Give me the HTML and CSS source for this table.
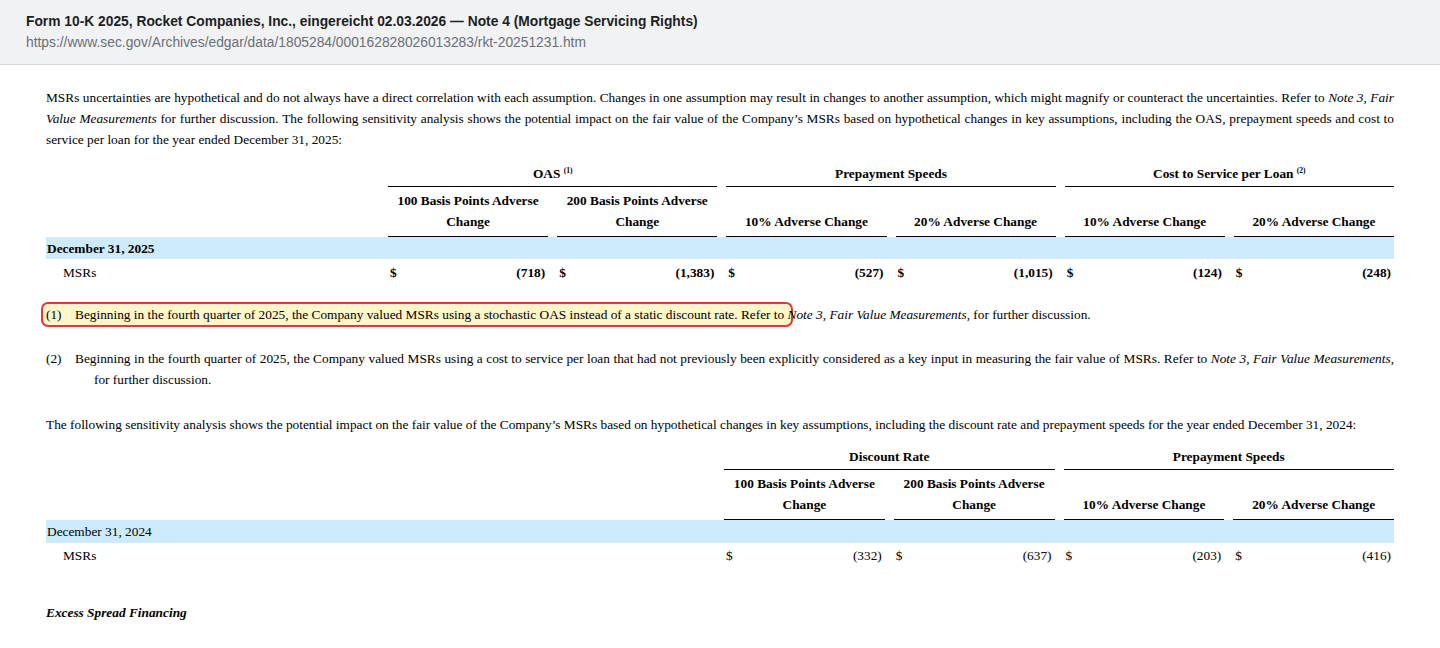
FILE: index.html
```html
<!DOCTYPE html>
<html lang="en">
<head>
<meta charset="utf-8">
<title>Note 4 (Mortgage Servicing Rights)</title>
<link rel="stylesheet" href="styles.css">
</head>
<body>
<header class="topbar">
  <div class="topbar-title">Form 10-K 2025, Rocket Companies, Inc., eingereicht 02.03.2026 — Note 4 (Mortgage Servicing Rights)</div>
  <div class="topbar-url">https://www.sec.gov/Archives/edgar/data/1805284/000162828026013283/rkt-20251231.htm</div>
</header>
<main class="doc">
  <p class="para">MSRs uncertainties are hypothetical and do not always have a direct correlation with each assumption. Changes in one assumption may result in changes to another assumption, which might magnify or counteract the uncertainties. Refer to <i>Note 3, Fair Value Measurements</i> for further discussion. The following sensitivity analysis shows the potential impact on the fair value of the Company’s MSRs based on hypothetical changes in key assumptions, including the OAS, prepayment speeds and cost to service per loan for the year ended December 31, 2025:</p>

  <div class="sens sens-6">
    <div class="g-label"></div>
    <div class="g-head span2">OAS <sup>(1)</sup></div>
    <div class="g-head span2">Prepayment Speeds</div>
    <div class="g-head span2">Cost to Service per Loan <sup>(2)</sup></div>

    <div class="s-label"></div>
    <div class="s-head">100 Basis Points Adverse Change</div>
    <div class="s-head">200 Basis Points Adverse Change</div>
    <div class="s-head">10% Adverse Change</div>
    <div class="s-head">20% Adverse Change</div>
    <div class="s-head">10% Adverse Change</div>
    <div class="s-head">20% Adverse Change</div>

    <div class="band bold">December 31, 2025</div>

    <div class="r-label">MSRs</div>
    <div class="val bold"><span>$</span><span>(718)</span></div>
    <div class="val bold"><span>$</span><span>(1,383)</span></div>
    <div class="val bold"><span>$</span><span>(527)</span></div>
    <div class="val bold"><span>$</span><span>(1,015)</span></div>
    <div class="val bold"><span>$</span><span>(124)</span></div>
    <div class="val bold"><span>$</span><span>(248)</span></div>
  </div>

  <p class="note note-1"><span class="hl"></span><span class="note-num">(1)</span>Beginning in the fourth quarter of 2025, the Company valued MSRs using a stochastic OAS instead of a static discount rate. Refer to <i>Note 3</i>, <i>Fair Value Measurements</i>, for further discussion.</p>

  <p class="note note-2"><span class="note-num">(2)</span>Beginning in the fourth quarter of 2025, the Company valued MSRs using a cost to service per loan that had not previously been explicitly considered as a key input in measuring the fair value of MSRs. Refer to <i>Note 3</i>, <i>Fair Value Measurements</i>, for further discussion.</p>

  <p class="para para-2">The following sensitivity analysis shows the potential impact on the fair value of the Company’s MSRs based on hypothetical changes in key assumptions, including the discount rate and prepayment speeds for the year ended December 31, 2024:</p>

  <div class="sens sens-4">
    <div class="g-label"></div>
    <div class="g-head span2">Discount Rate</div>
    <div class="g-head span2">Prepayment Speeds</div>

    <div class="s-label"></div>
    <div class="s-head">100 Basis Points Adverse Change</div>
    <div class="s-head">200 Basis Points Adverse Change</div>
    <div class="s-head">10% Adverse Change</div>
    <div class="s-head">20% Adverse Change</div>

    <div class="band">December 31, 2024</div>

    <div class="r-label">MSRs</div>
    <div class="val"><span>$</span><span>(332)</span></div>
    <div class="val"><span>$</span><span>(637)</span></div>
    <div class="val"><span>$</span><span>(203)</span></div>
    <div class="val"><span>$</span><span>(416)</span></div>
  </div>

  <p class="subhead"><b><i>Excess Spread Financing</i></b></p>
</main>
</body>
</html>
```
FILE: styles.css
```css
* { box-sizing: border-box; }

html, body {
  margin: 0;
  padding: 0;
  background: #ffffff;
}

body {
  font-family: "Liberation Serif", "Times New Roman", serif;
  font-size: 13.33px;
  color: #000;
}

.topbar {
  height: 65px;
  background: #f1f2f4;
  border-bottom: 1px solid #d4d7dc;
  padding: 11px 0 0 26px;
  font-family: "Liberation Sans", Arial, sans-serif;
}

.topbar-title {
  font-size: 13.8px;
  font-weight: bold;
  line-height: 21px;
  color: #1d1f23;
}

.topbar-url {
  font-size: 13.8px;
  line-height: 21px;
  color: #6b6f76;
}

.doc {
  padding: 22px 46px 0 46px;
}

.para {
  margin: 0;
  line-height: 21px;
  text-align: justify;
}

.para-2 {
  margin-top: 24px;
}

/* sensitivity tables */
.sens {
  display: grid;
  column-gap: 9px;
  line-height: 21px;
  font-weight: bold;
}

.sens-6 {
  grid-template-columns: 333px repeat(6, 1fr);
  margin-top: 13px;
}

.sens-4 {
  grid-template-columns: 669px repeat(4, 1fr);
  margin-top: 11px;
}

.g-head {
  text-align: center;
  border-bottom: 1px solid #000;
  padding-bottom: 2px;
}

.span2 { grid-column: span 2; }

sup {
  font-size: 7.5px;
  line-height: 0;
  vertical-align: 5px;
}

.s-head {
  text-align: center;
  border-bottom: 1px solid #000;
  padding: 3px 6px 4px;
  display: flex;
  align-items: flex-end;
  justify-content: center;
}

.band {
  grid-column: 1 / -1;
  background: #cdebfc;
  height: 22px;
  line-height: 21px;
  padding: 1px 0 0 1px;
  font-weight: normal;
}

.band.bold { font-weight: bold; }

.sens-4 .band { height: 23px; line-height: 22px; padding-top: 1px; }

.r-label {
  font-weight: normal;
  padding: 2px 0 0 17px;
  line-height: 22px;
}

.val {
  display: flex;
  justify-content: space-between;
  padding: 2px 3px 0 2px;
  line-height: 22px;
  font-weight: normal;
}

.sens-6 .r-label,
.sens-6 .val { padding-top: 3px; }

.val.bold { font-weight: bold; }

/* footnotes */
.note {
  margin: 0;
  line-height: 21px;
  padding-left: 48px;
  text-indent: -48px;
  text-align: justify;
  position: relative;
  z-index: 0;
}

.note-num {
  display: inline-block;
  width: 29px;
  text-indent: 0;
}

.note-1 {
  margin-top: 20px;
}

.note-2 {
  margin-top: 23px;
}

.hl {
  position: absolute;
  left: -5px;
  top: -2px;
  width: 752px;
  height: 25px;
  background: #fdf6c9;
  border: 2px solid #e0393b;
  border-radius: 7px;
  z-index: -1;
}

.subhead {
  margin: 35px 0 0;
  line-height: 21px;
}
```
